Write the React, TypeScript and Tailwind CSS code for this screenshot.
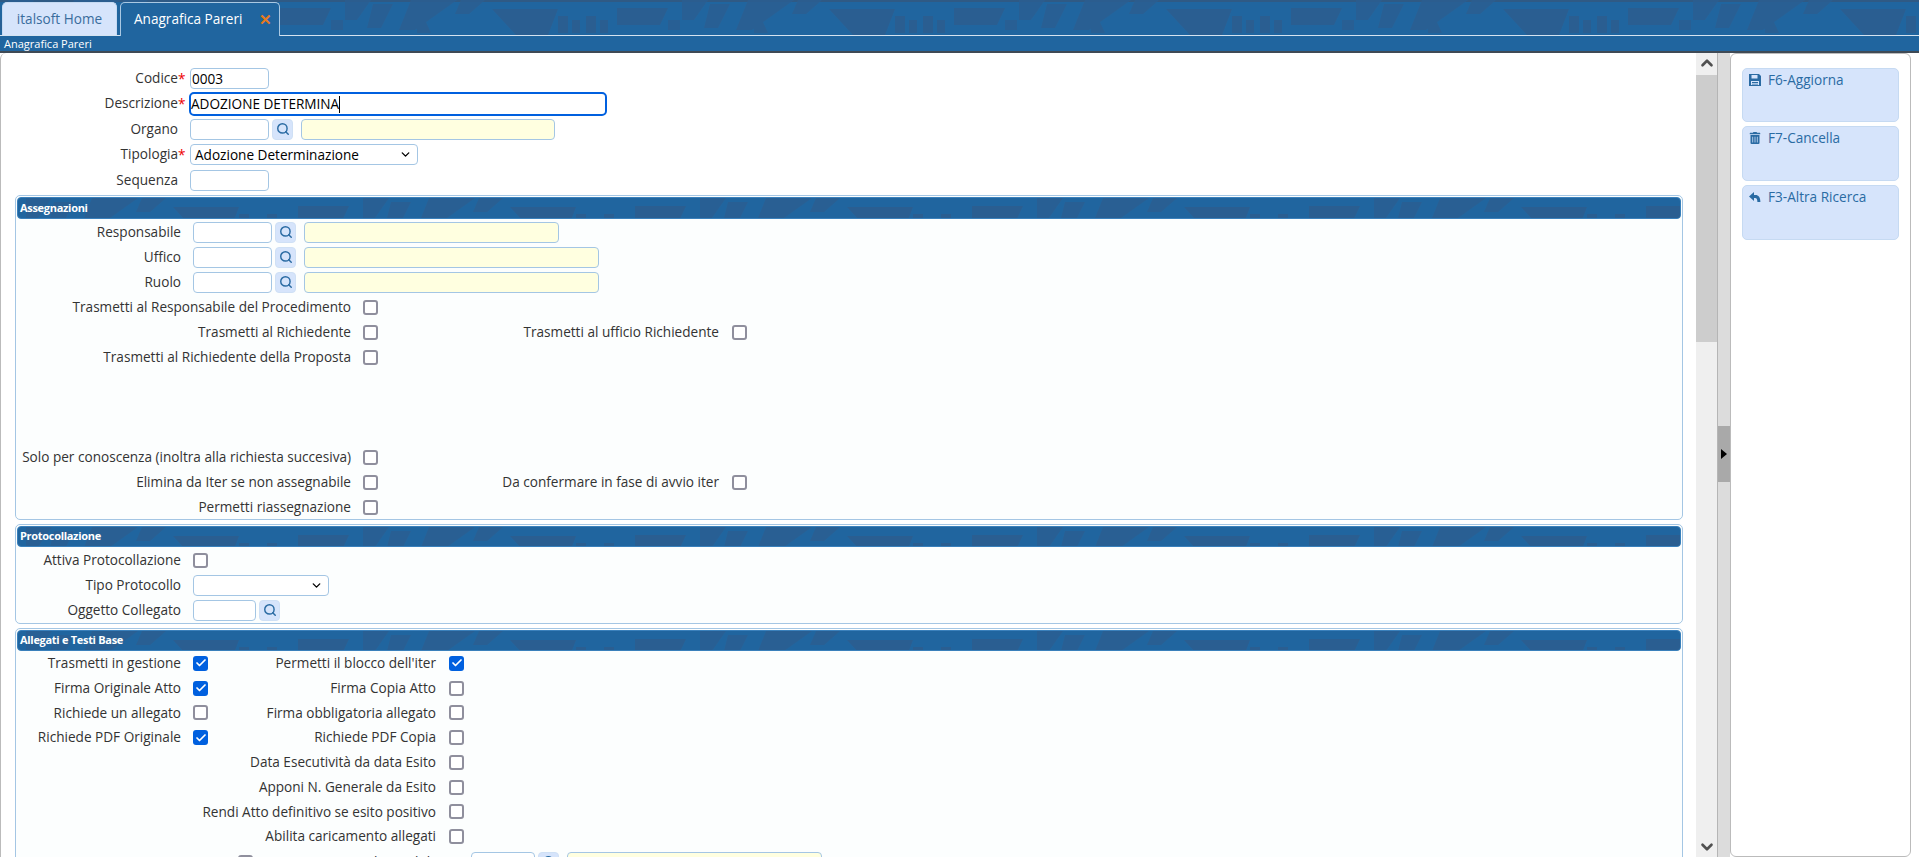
import React from "react";
import { Check, ChevronDown, ChevronUp, Search } from "lucide-react";
import { FaTrashAlt } from "react-icons/fa";

// dark blue shapes repeated across the header bars
function BannerPattern({ id }: { id: string }) {
  return (
    <svg className="absolute inset-0 w-full h-full pointer-events-none" aria-hidden="true">
      <defs>
        <pattern id={id} x="155" y="0" width="337" height="36" patternUnits="userSpaceOnUse">
          <path d="M0 9h66l-10 26H24z" fill="#2a5e91" />
          <path d="M66 16h10v17H66zM80 20h8v13h-8zM94 16h10v17H94zM108 20h8v13h-8z" fill="#2a5e91" />
          <path d="M125 8h51l-8 17h-43z" fill="#2a5e91" />
          <path d="M176 20h12v10h-12zM190 0h26l-14 20h-12zM218 4h20l-12 24h-14z" fill="#2a5e91" opacity="0.8" />
          <path d="M256 0h46l-42 30h-16zM262 24l8-4 6 13h-14zM306 0h24l-16 14h-14z" fill="#2a5e91" opacity="0.85" />
        </pattern>
      </defs>
      <rect width="100%" height="100%" fill={`url(#${id})`} />
    </svg>
  );
}

function Legend({ title, id, height = "h-[21px]" }: { title: string; id: string; height?: string }) {
  return (
    <div className={`relative mx-[1px] mt-[1px] ${height} rounded-[4px] bg-[#20659f] border border-[#3a80bb] overflow-hidden flex items-center pl-[2px]`}>
      <BannerPattern id={id} />
      <span className="relative text-[11px] font-bold text-white tracking-[-0.3px]">{title}</span>
    </div>
  );
}

function TextBox({ width, value }: { width: string; value?: string }) {
  return (
    <input
      readOnly
      defaultValue={value}
      className={`${width} h-[21px] border border-[#a4c6e4] rounded-[4px] bg-white px-[1px] text-[13.6px] text-black outline-none`}
    />
  );
}

function Lookup({ width, descWidth }: { width: string; descWidth?: string }) {
  return (
    <>
      <TextBox width={width} />
      <button className="ml-[3px] w-[21px] h-[21px] rounded-[4px] bg-[#d6e4fb] border border-[#cfe0f5] flex items-center justify-center text-[#2a6ba3]">
        <Search size={14} strokeWidth={2.5} />
      </button>
      {descWidth && (
        <div className={`${descWidth} ml-[8px] h-[21px] rounded-[4px] border border-[#a4c6e4] bg-[#ffffe0]`} />
      )}
    </>
  );
}

function CheckBox({ checked }: { checked?: boolean }) {
  if (checked) {
    return (
      <div className="w-[15px] h-[15px] shrink-0 rounded-[3px] bg-[#0060df] flex items-center justify-center text-white">
        <Check size={12} strokeWidth={3.5} />
      </div>
    );
  }
  return <div className="w-[15px] h-[15px] shrink-0 rounded-[3px] border-2 border-[#8f8f9d] bg-white" />;
}

function Combo({ width, value }: { width: string; value?: string }) {
  return (
    <div className={`${width} h-[21px] border border-[#a4c6e4] rounded-[4px] bg-white flex items-center justify-between pl-[4px] pr-[5px] text-[13.6px] text-black`}>
      <span>{value}</span>
      <ChevronDown size={13} strokeWidth={2.5} />
    </div>
  );
}

// label column, red star column, then the field
function FormRow({ label, required, children }: { label: string; required?: boolean; children: React.ReactNode }) {
  return (
    <div className="flex items-center h-[25.4px]">
      <div className="w-[178px] text-right -mt-[1px]">{label}</div>
      <div className="w-[12px] text-[#e00] leading-[10px] h-[10px]">{required ? "*" : ""}</div>
      {children}
    </div>
  );
}

function FieldRow({ label, children }: { label: string; children: React.ReactNode }) {
  return (
    <div className="flex items-center h-[25px]">
      <div className="w-[165px] text-right -mt-[1px]">{label}</div>
      <div className="ml-[12px] flex items-center">{children}</div>
    </div>
  );
}

function CheckRow({
  label,
  checked,
  second,
}: {
  label: string;
  checked?: boolean;
  second?: string;
}) {
  return (
    <div className="flex items-center h-[25px]">
      <div className="w-[335px] text-right whitespace-nowrap">{label}</div>
      <div className="ml-[12px]">
        <CheckBox checked={checked} />
      </div>
      {second && (
        <>
          <div className="w-[341px] text-right whitespace-nowrap">{second}</div>
          <div className="ml-[13px]">
            <CheckBox />
          </div>
        </>
      )}
    </div>
  );
}

function DoubleCheckRow({
  left,
  leftChecked,
  right,
  rightChecked,
}: {
  left?: string;
  leftChecked?: boolean;
  right: string;
  rightChecked?: boolean;
}) {
  return (
    <div className="flex items-center h-[24.75px]">
      <div className="w-[165px] text-right whitespace-nowrap">{left}</div>
      <div className="ml-[12px] w-[15px]">{left && <CheckBox checked={leftChecked} />}</div>
      <div className="w-[228px] flex justify-end whitespace-nowrap">{right}</div>
      <div className="ml-[13px]">
        <CheckBox checked={rightChecked} />
      </div>
    </div>
  );
}

function ActionButton({ icon, label, height }: { icon: React.ReactNode; label: string; height: string }) {
  return (
    <button className={`w-[157px] ${height} rounded-[5px] bg-[#d6e4fb] border border-[#c6daf2] flex items-start pt-[1px] pl-[6px] text-[13.6px] text-[#2a6ba3]`}>
      <span className="w-[19px] h-[19px] flex items-center text-[12px]">{icon}</span>
      <span className="leading-[19px]">{label}</span>
    </button>
  );
}

function SaveIcon() {
  return (
    <svg width="12" height="12" viewBox="0 0 12 12" fill="currentColor">
      <path d="M0 0h10l2 2v10H0zM2.5 1v3.5h6V1zM2 7v4h8V7z" fillRule="evenodd" />
      <path d="M3 8h6v1H3zM3 9.7h6v.8H3z" />
    </svg>
  );
}

function ReplyIcon() {
  return (
    <svg width="12" height="12" viewBox="0 0 12 12" fill="currentColor">
      <path d="M5 1 0 5.5 5 10V7h1c2 0 2.4 2 2.4 4h3C11.4 6.5 9.5 4 6.5 4H5z" />
    </svg>
  );
}

export default function App() {
  return (
    <div
      className="w-full h-[857px] overflow-hidden flex flex-col bg-white text-[13.6px] text-[#333]"
      style={{ fontFamily: '"Open Sans", sans-serif' }}
    >
      {/* TABS */}
      <div className="relative h-[36px] shrink-0 bg-[#20659f] border-b border-[#d5e3f0]">
        <div className="absolute inset-x-0 top-0 h-[2px] bg-[#2f5a85]" />
        <BannerPattern id="top" />
        <div className="relative flex items-end h-[35px] pl-[2px] gap-[3px]">
          <div className="w-[115px] h-[33px] rounded-t-[5px] bg-[#d6e4fb] border border-[#c6daf2] border-b-0 flex items-center justify-center text-[13.6px] text-[#3a6d9d]">
            italsoft Home
          </div>
          <div className="w-[160px] h-[34px] -mb-px rounded-t-[5px] bg-[#20659f] border border-[#a9c8e3] border-b-0 flex items-center pl-[13px] text-[13.6px] text-white">
            Anagrafica Pareri
            <span className="ml-[16px] text-[#e87a1d] font-bold text-[15px] leading-none">✕</span>
          </div>
        </div>
      </div>
      <div className="h-[17px] shrink-0 bg-[#20659f] border-b-2 border-[#3f4a55] pl-[4px] text-[11px] leading-[15px] text-white">
        Anagrafica Pareri
      </div>

      <div className="flex flex-1 min-h-0">
        {/* FORM */}
        <div className="w-[1696px] shrink-0 overflow-hidden border-l border-[#bbb] rounded-tl-[6px] pt-[13px]">
          <div className="-ml-px">
            <FormRow label="Codice" required>
              <TextBox width="w-[79px]" value="0003" />
            </FormRow>
            <FormRow label="Descrizione" required>
              <div className="-ml-px w-[418px] h-[24px] rounded-[5px] border-2 border-[#0060df] bg-white flex items-center text-[13.6px] text-black">
                ADOZIONE DETERMINA
                <span className="w-px h-[17px] bg-black" />
              </div>
            </FormRow>
            <FormRow label="Organo">
              <Lookup width="w-[79px]" descWidth="w-[254px]" />
            </FormRow>
            <FormRow label="Tipologia" required>
              <Combo width="w-[228px]" value="Adozione Determinazione" />
            </FormRow>
            <FormRow label="Sequenza">
              <TextBox width="w-[79px]" />
            </FormRow>
          </div>

          {/* ASSEGNAZIONI */}
          <div className="ml-[14px] w-[1668px] h-[325px] mt-[2px] rounded-[5px] border border-[#a4c6e4] bg-[#fcfefe]">
            <Legend title="Assegnazioni" id="assegnazioni" height="h-[22px]" />
            <div className="pt-[1px]">
              <FieldRow label="Responsabile">
                <Lookup width="w-[79px]" descWidth="w-[255px]" />
              </FieldRow>
              <FieldRow label="Uffico">
                <Lookup width="w-[79px]" descWidth="w-[295px]" />
              </FieldRow>
              <FieldRow label="Ruolo">
                <Lookup width="w-[79px]" descWidth="w-[295px]" />
              </FieldRow>
              <CheckRow label="Trasmetti al Responsabile del Procedimento" />
              <CheckRow label="Trasmetti al Richiedente" second="Trasmetti al ufficio Richiedente" />
              <CheckRow label="Trasmetti al Richiedente della Proposta" />
              <div className="h-[75px]" />
              <CheckRow label="Solo per conoscenza (inoltra alla richiesta succesiva)" />
              <CheckRow label="Elimina da Iter se non assegnabile" second="Da confermare in fase di avvio iter" />
              <CheckRow label="Permetti riassegnazione" />
            </div>
          </div>

          {/* PROTOCOLLAZIONE */}
          <div className="ml-[14px] w-[1668px] h-[100px] mt-[4px] rounded-[5px] border border-[#a4c6e4] bg-[#fcfefe]">
            <Legend title="Protocollazione" id="protocollazione" />
            <div className="pt-[1px]">
              <FieldRow label="Attiva Protocollazione">
                <CheckBox />
              </FieldRow>
              <FieldRow label="Tipo Protocollo">
                <Combo width="w-[136px]" />
              </FieldRow>
              <FieldRow label="Oggetto Collegato">
                <Lookup width="w-[63px]" />
              </FieldRow>
            </div>
          </div>

          {/* ALLEGATI */}
          <div className="ml-[14px] w-[1668px] h-[300px] mt-[4px] rounded-[5px] border border-[#a4c6e4] bg-[#fcfefe]">
            <Legend title="Allegati e Testi Base" id="allegati" />
            <DoubleCheckRow left="Trasmetti in gestione" leftChecked right="Permetti il blocco dell'iter" rightChecked />
            <DoubleCheckRow left="Firma Originale Atto" leftChecked right="Firma Copia Atto" />
            <DoubleCheckRow left="Richiede un allegato" right="Firma obbligatoria allegato" />
            <DoubleCheckRow left="Richiede PDF Originale" leftChecked right="Richiede PDF Copia" />
            <DoubleCheckRow right="Data Esecutività da data Esito" />
            <DoubleCheckRow right="Apponi N. Generale da Esito" />
            <DoubleCheckRow right="Rendi Atto definitivo se esito positivo" />
            <DoubleCheckRow right="Abilita caricamento allegati" />
            <div className="flex items-center h-[26.75px] pl-[222px]">
              <CheckBox />
              <div className="w-[206px] text-right whitespace-nowrap">Testo base abilitato</div>
              <div className="ml-[12px] flex items-center">
                <Lookup width="w-[64px]" descWidth="w-[255px]" />
              </div>
            </div>
          </div>
        </div>

        {/* SCROLLBAR */}
        <div className="relative w-[21px] shrink-0 bg-[#efefef] flex flex-col items-center justify-between text-[#505050]">
          <ChevronUp size={18} strokeWidth={3.5} className="mt-[1px]" />
          <div className="absolute top-[22px] inset-x-0 h-[267px] bg-[#cdcdcd]" />
          <ChevronDown size={18} strokeWidth={3.5} className="mb-[1px]" />
        </div>

        {/* SPLITTER */}
        <div className="w-[13px] shrink-0 bg-[#dcdcdc] border-l border-[#b5b5b5] flex items-center pb-[1px]">
          <div className="w-full h-[56px] -mt-[2px] bg-[#a9a9a9] flex items-center justify-center">
            <div className="w-0 h-0 border-y-[5px] border-y-transparent border-l-[6px] border-l-black" />
          </div>
        </div>

        {/* ACTIONS */}
        <div className="w-[181px] shrink-0 rounded-[6px] border border-[#bbb] bg-white pt-[14px] pl-[11px] flex flex-col gap-[4px]">
          <ActionButton icon={<SaveIcon />} label="F6-Aggiorna" height="h-[54px]" />
          <ActionButton icon={<FaTrashAlt />} label="F7-Cancella" height="h-[55px]" />
          <ActionButton icon={<ReplyIcon />} label="F3-Altra Ricerca" height="h-[55px]" />
        </div>
      </div>
    </div>
  );
}
